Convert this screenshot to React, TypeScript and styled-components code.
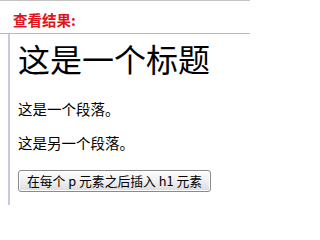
import React from 'react';
import styled, { createGlobalStyle } from 'styled-components';

const GlobalStyle = createGlobalStyle`
  html, body {
    margin: 0;
    padding: 0;
    background: #fff;
  }
  body {
    font-family: "Liberation Sans", "Noto Sans CJK SC", sans-serif;
  }
`;

const Page = styled.div`
  width: 250px;
  height: 205px;
  overflow: hidden;
  border-top: 1px solid #c4c4c4;
  box-sizing: border-box;
`;

const ResultLabel = styled.div`
  margin: 11px 0 0 13px;
  height: 21px;
  font-size: 14.5px;
  line-height: 16px;
  font-weight: bold;
  color: #e0141e;
  font-family: "Noto Sans CJK SC", sans-serif;
`;

const Frame = styled.div`
  border-top: 1px solid #b4bacd;
  display: flex;
`;

const FrameGutter = styled.div`
  width: 8px;
  flex: none;
`;

const FrameBody = styled.div`
  flex: 1;
  border-left: 2px solid #c8c8e4;
  padding: 6px 0 20px 8px;
  font-family: "Noto Sans CJK SC", sans-serif;
  color: #000;
`;

const Heading = styled.h1`
  margin: 0 0 22px;
  font-size: 32px;
  line-height: 37px;
  font-weight: normal;
`;

const Paragraph = styled.p`
  margin: 0 0 14px;
  font-size: 14.5px;
  line-height: 20px;
`;

const InsertButton = styled.button`
  margin: 0;
  height: 22px;
  padding: 0 8px;
  font-size: 12.8px;
  line-height: 18px;
  font-family: "Noto Sans CJK SC", sans-serif;
  color: #000;
  background: linear-gradient(#fdfdfd, #f0f0f0 50%, #dcdcdc);
  border: 1px solid #8a8a8a;
  border-radius: 3px;
  box-shadow: inset 0 0 0 1px #fff;
  white-space: nowrap;
`;

export default function App() {
  return (
    <>
      <GlobalStyle />
      <Page>
        <ResultLabel>查看结果:</ResultLabel>
        <Frame>
          <FrameGutter />
          <FrameBody>
            <Heading>这是一个标题</Heading>
            <Paragraph>这是一个段落。</Paragraph>
            <Paragraph>这是另一个段落。</Paragraph>
            <InsertButton>在每个 p 元素之后插入 h1 元素</InsertButton>
          </FrameBody>
        </Frame>
      </Page>
    </>
  );
}
